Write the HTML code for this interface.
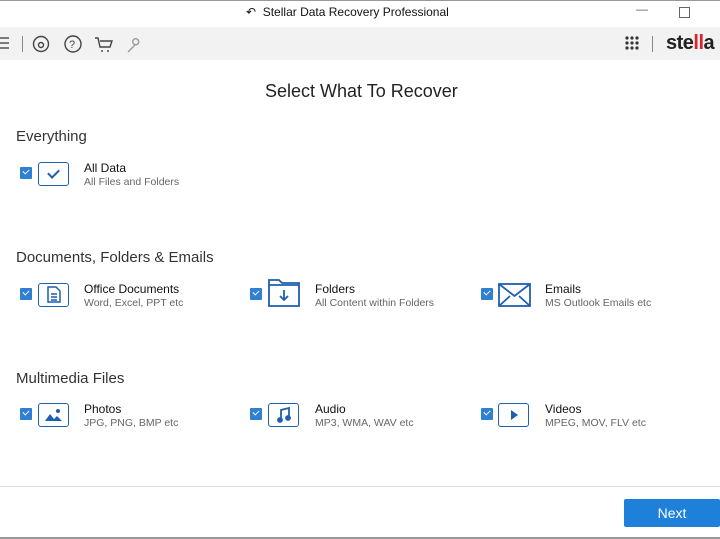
<!DOCTYPE html><html><head><style>
body{margin:0;width:720px;height:539px;overflow:hidden;background:#fff;font-family:"Liberation Sans",sans-serif;position:relative}
.a{position:absolute}
.cb{position:absolute;width:12px;height:12px;background:#2f7fd3;border-radius:1px}
.cb:after{content:"";position:absolute;left:3px;top:2px;width:5px;height:3px;border-left:1.5px solid #fff;border-bottom:1.5px solid #fff;transform:rotate(-45deg)}
.ic{position:absolute;width:29px;height:22px;border:1.8px solid #1d5fb0;border-radius:3px}
.t{position:absolute;font-size:12px;color:#111}
.s{position:absolute;font-size:10.5px;color:#666}
.h{position:absolute;font-size:15px;color:#333;left:16px}
</style></head><body>
<div class="a" style="left:0;top:0;width:720px;height:1px;background:#999"></div>
<div class="a" style="left:0;top:1px;width:720px;height:26px;background:#fff"></div>
<div class="a" style="left:246px;top:5px;font-size:12px;color:#111">&#8630;&nbsp; Stellar Data Recovery Professional</div>
<div class="a" style="left:636px;top:2px;font-size:12px;color:#666">&#8212;</div>
<div class="a" style="left:679px;top:7px;width:9px;height:9px;border:1px solid #666"></div>
<div class="a" style="left:0;top:27px;width:720px;height:33px;background:#f2f2f2"></div>
<svg class="a" style="left:0;top:37px" width="10" height="12" stroke="#333" stroke-width="1.3"><path d="M0 1h9M0 6h9M0 11h9"/></svg>
<div class="a" style="left:22px;top:36px;width:1px;height:16px;background:#888"></div>
<svg class="a" style="left:30px;top:33px" width="120" height="22" fill="none" stroke="#444" stroke-width="1.4">
<circle cx="11" cy="11" r="7.5"/><circle cx="11" cy="12" r="2.5"/>
<circle cx="43" cy="11" r="8"/><text x="39" y="15" font-size="11" fill="#444" stroke="none" font-family="Liberation Sans">?</text>
<path d="M65 5h3l2 9h10l2-6H70M72 17v2M78 17v2"/>
<path d="M98 19l7-7M103 10a3 3 0 1 0 4-4a3 3 0 0 0-4 4" stroke="#999"/></svg>
<svg class="a" style="left:625px;top:36px" width="16" height="16" fill="#333"><circle cx="2" cy="2" r="1.6"/><circle cx="7" cy="2" r="1.6"/><circle cx="12" cy="2" r="1.6"/><circle cx="2" cy="7" r="1.6"/><circle cx="7" cy="7" r="1.6"/><circle cx="12" cy="7" r="1.6"/><circle cx="2" cy="12" r="1.6"/><circle cx="7" cy="12" r="1.6"/><circle cx="12" cy="12" r="1.6"/></svg>
<div class="a" style="left:652px;top:36px;width:1px;height:16px;background:#888"></div>
<div class="a" style="left:666px;top:32px;font-size:20px;font-weight:bold;color:#222;letter-spacing:-0.5px">ste<span style="color:#d8262e">ll</span>a</div>
<div class="a" style="left:265px;top:81px;font-size:18px;color:#222">Select What To Recover</div>
<div class="h" style="top:128px">Everything</div>
<div class="cb" style="left:20px;top:167px"></div><div class="ic" style="left:38px;top:162px"><div class="a" style="left:11px;top:4px;width:5px;height:9px;border-right:2px solid #1d5fb0;border-bottom:2px solid #1d5fb0;transform:rotate(45deg)"></div></div>
<div class="t" style="left:84px;top:161px">All Data</div><div class="s" style="left:84px;top:176px">All Files and Folders</div>
<div class="h" style="top:249px">Documents, Folders &amp; Emails</div>
<div class="cb" style="left:20px;top:288px"></div><div class="ic" style="left:38px;top:283px"><svg class="a" style="left:8px;top:2px" width="14" height="17" fill="none" stroke="#1d5fb0" stroke-width="1.5"><path d="M1 1h8l4 4v11H1zM4 8h6M4 11h6M4 14h6"/></svg></div>
<div class="t" style="left:84px;top:282px">Office Documents</div><div class="s" style="left:84px;top:297px">Word, Excel, PPT etc</div>
<div class="cb" style="left:250px;top:288px"></div>
<svg class="a" style="left:267px;top:278px" width="34" height="30" fill="none" stroke="#1d5fb0" stroke-width="1.8"><path d="M2 28V2h10l3 3h17v23zM2 7h30M17 12v10M13 18l4 4 4-4"/></svg>
<div class="t" style="left:315px;top:282px">Folders</div><div class="s" style="left:315px;top:297px">All Content within Folders</div>
<div class="cb" style="left:481px;top:288px"></div>
<svg class="a" style="left:498px;top:283px" width="34" height="25" fill="none" stroke="#1d5fb0" stroke-width="1.8"><rect x="1" y="1" width="31" height="22"/><path d="M1 1l15.5 12L32 1M1 23l11-10M32 23L21 13"/></svg>
<div class="t" style="left:545px;top:282px">Emails</div><div class="s" style="left:545px;top:297px">MS Outlook Emails etc</div>
<div class="h" style="top:370px">Multimedia Files</div>
<div class="cb" style="left:20px;top:408px"></div><div class="ic" style="left:38px;top:403px"><svg class="a" style="left:5px;top:3px" width="20" height="16" fill="#1d5fb0"><path d="M1 14l5-7 4 5 3-3 5 5z"/><circle cx="14" cy="4" r="2"/></svg></div>
<div class="t" style="left:84px;top:402px">Photos</div><div class="s" style="left:84px;top:417px">JPG, PNG, BMP etc</div>
<div class="cb" style="left:250px;top:408px"></div><div class="ic" style="left:268px;top:403px"><svg class="a" style="left:8px;top:3px" width="14" height="16" fill="none" stroke="#1d5fb0" stroke-width="1.8"><path d="M4 13V3l8-2v10"/><circle cx="3" cy="13" r="2" fill="#1d5fb0"/><circle cx="11" cy="11" r="2" fill="#1d5fb0"/></svg></div>
<div class="t" style="left:315px;top:402px">Audio</div><div class="s" style="left:315px;top:417px">MP3, WMA, WAV etc</div>
<div class="cb" style="left:481px;top:408px"></div><div class="ic" style="left:498px;top:403px"><svg class="a" style="left:11px;top:5px" width="10" height="12" fill="#1d5fb0"><path d="M1 1l7 5-7 5z"/></svg></div>
<div class="t" style="left:545px;top:402px">Videos</div><div class="s" style="left:545px;top:417px">MPEG, MOV, FLV etc</div>
<div class="a" style="left:0;top:486px;width:720px;height:1px;background:#e2e2e2"></div>
<div class="a" style="left:624px;top:499px;width:96px;height:28px;background:#1e80d8;color:#fff;font-size:14px;line-height:28px;text-align:center;border-radius:2px">Next</div>
<div class="a" style="left:0;top:537px;width:720px;height:2px;background:#999"></div>
</body></html>
